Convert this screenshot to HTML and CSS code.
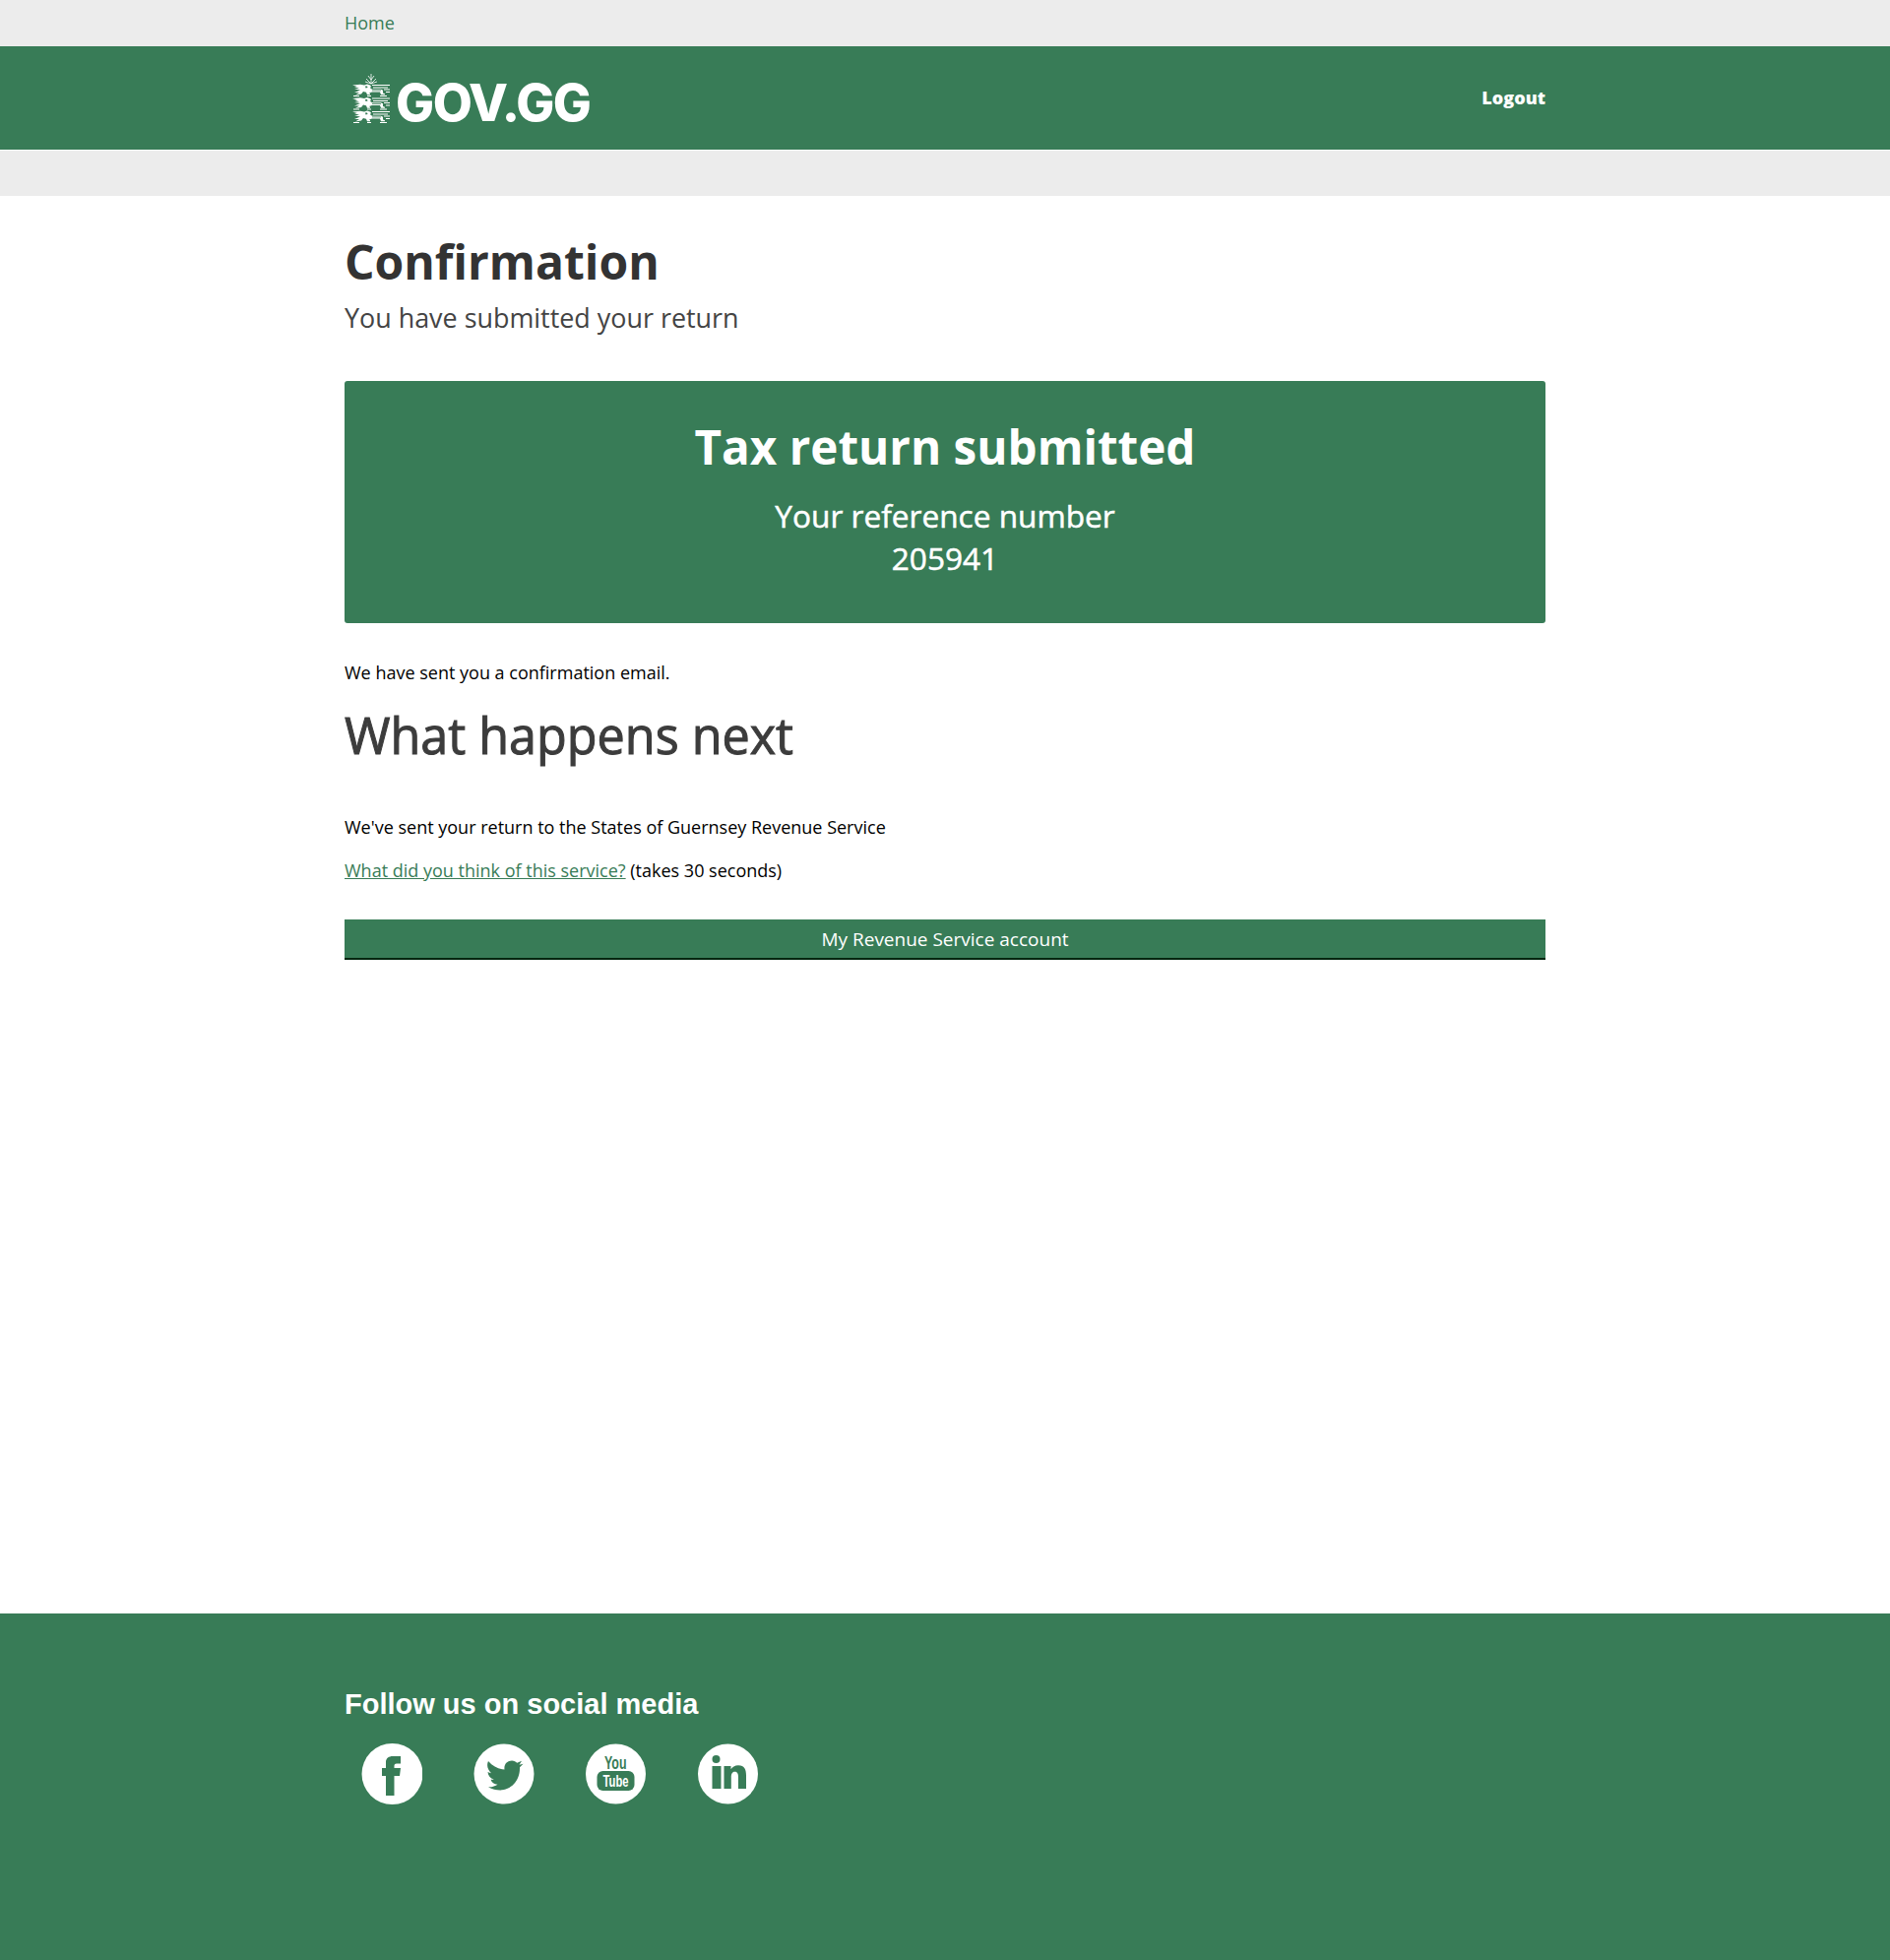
FILE: index.html
```html
<!DOCTYPE html>
<html lang="en">
<head>
<meta charset="utf-8">
<title>Confirmation</title>
<link rel="stylesheet" href="styles.css">
</head>
<body>
<nav class="crumbs"><div class="wrap"><a class="crumb" href="#">Home</a></div></nav>
<header class="masthead">
  <div class="wrap masthead-in">
    <a class="logo" href="#">
      <svg class="crest" viewBox="0 0 38 50" width="38" height="50" aria-hidden="true">
        <g fill="none" stroke="#fff" stroke-width=".8">
          <path d="M19 0v10M19 10l-5-5M19 10l5-5M19 10l-6-2M19 10l6-2M19 6l-3-4M19 6l3-4"/>
        </g>
        <g id="lion" fill="#fff">
          <path d="M0 11.500L5 13L2 13.300L7 14.800L2 15.600L8 16.600L2 19L7 18.900L3 21.400L9 20.400L11 17.900L14 18.700L15 21.200H18V20.200L17 19.400L20 18.400H28L29 21.200H33V20.200L31 19.400V16.700L29 15.700H20L18 14.200L19 12.700L18 11.500L15 10.500L12 11.500L8 10.800Z"/>
          <path d="M20 11h18v1H20zM21 13.500h15v.9H21zM32 15.500h6v1h-6zM34 18h4v1h-4zM15 22h4v1h-4zM28 22h7v1h-7zM1 22h6v1H1z"/>
          <path class="crest-eye" d="M13 12.500h2l.5 1.500-2 .5z"/>
          <path class="crest-eye" d="M20 16.500h9v.8h-9z"/>
        </g>
        <use href="#lion" y="13.500"/>
        <use href="#lion" y="27"/>
      </svg>
      <span class="wordmark">GOV.GG</span>
    </a>
    <a class="logout" href="#">Logout</a>
  </div>
</header>
<div class="subbar"></div>
<main class="wrap main">
  <h1 class="title">Confirmation</h1>
  <p class="lead">You have submitted your return</p>
  <section class="panel">
    <h2 class="panel-title">Tax return submitted</h2>
    <div class="panel-body">Your reference number<br>205941</div>
  </section>
  <p class="text">We have sent you a confirmation email.</p>
  <h2 class="next">What happens next</h2>
  <p class="text">We've sent your return to the States of Guernsey Revenue Service</p>
  <p class="text"><a class="link" href="#">What did you think of this service?</a> (takes 30 seconds)</p>
  <a class="btn" href="#">My Revenue Service account</a>
</main>
<footer class="footer">
  <div class="wrap">
    <h2 class="follow">Follow us on social media</h2>
    <ul class="social">
      <li><svg viewBox="0 0 62 62" width="62" height="62"><circle cx="31.500" cy="31" r="31" fill="#fff"/><path class="glyph" d="M25 53V33h-4v-8h4v-6c0-4 3-6 7-6h8v7.500h-4c-2 0-2.500 1-2.500 2.500V25h6.500l-1 8h-5.500v20z"/></svg></li>
      <li><svg viewBox="0 0 62 62" width="62" height="62"><circle cx="31" cy="31" r="30.500" fill="#fff"/><path class="glyph" d="M15 18c5 5.500 10.500 8 16.500 8.500-.8-5.500 3-9 7.500-9 2.300 0 4 1 5.300 2.300l4.700-2-2.500 4 4-1-3.500 3.500C47.500 38 38 47.500 27 47.500c-4 0-8-1-12-3.300 3.500.3 7-.7 9.500-2.500-3.500-.5-6-2-7-5 1.200.2 2.300.2 3.300-.2-3.800-1-6-4-6.300-7.500 1.200.7 2.400 1 3.500 1.200C14.500 27 13 22.500 15 18z"/></svg></li>
      <li><svg viewBox="0 0 62 62" width="62" height="62"><circle cx="30.500" cy="31" r="30.500" fill="#fff"/><text x="19" y="26" class="yt-you" textLength="22.500" lengthAdjust="spacingAndGlyphs">You</text><rect class="glyph" x="11.500" y="28" width="38" height="20" rx="6"/><text x="17.500" y="44" class="yt-tube" textLength="26" lengthAdjust="spacingAndGlyphs">Tube</text></svg></li>
      <li><svg viewBox="0 0 62 62" width="62" height="62"><circle cx="30.500" cy="31" r="30.500" fill="#fff"/><circle class="glyph" cx="18.500" cy="16" r="4"/><path class="glyph" d="M14.500 23h9v23h-9zM26.500 23h7v3.300c1.300-2.200 4-4 7.500-4 6.500 0 8 4.500 8 10.500V46h-8V34.500c0-3-.6-5.700-3.500-5.700s-3.700 2.500-3.700 5.500V46h-7.300z"/></svg></li>
    </ul>
  </div>
</footer>
</body>
</html>
```

FILE: styles.css
```css
* { box-sizing: border-box; }
html, body { margin: 0; padding: 0; }
body { font-family: "Open Sans", sans-serif; color: #000; background: #fff; min-height: 1991px; display: flex; flex-direction: column; }
.wrap { width: 1220px; margin: 0 auto; }
.crumbs { height: 47px; background: #ececec; display: flex; align-items: center; padding-bottom: 2px; }
.crumb { color: #387c57; font-size: 18px; text-decoration: none; }
.masthead { height: 106px; background: #387c57; border-bottom: 1px solid #fff; }
.masthead-in { height: 105px; display: flex; align-items: center; justify-content: space-between; }
.logo { display: flex; align-items: center; padding-left: 8px; color: #fff; text-decoration: none; }
.crest { margin-right: 6px; }
.crest-eye, .glyph { fill: #387c57; }
.wordmark { font-family: "Inter", sans-serif; font-weight: 800; font-size: 52px; letter-spacing: -1.500px; line-height: 1; margin-top: 10px; }
.logout { color: #fff; font-weight: 800; font-size: 18px; text-decoration: none; margin-top: -2px; }
.subbar { height: 46px; background: #ececec; }
.main { flex: 1; padding-top: 38px; }
.title { margin: 0; font-size: 48px; line-height: 58px; font-weight: 700; color: #333; }
.lead { margin: 10px 0 0; font-size: 26.900px; line-height: 36px; color: #444; }
.panel { margin-top: 46px; height: 246px; padding-top: 35px; background: #387c57; border-radius: 3px; color: #fff; text-align: center; }
.panel-title { margin: 0; font-size: 47.600px; line-height: 64px; font-weight: 700; }
.panel-body { margin-top: 16px; font-size: 31.600px; line-height: 43px; font-weight: 400; -webkit-text-stroke: 0.5px #fff; }
.text { margin: 0 0 20px; font-size: 18px; line-height: 24px; }
.panel + .text { margin-top: 38px; margin-bottom: 0; }
.next { margin: 20px 0 49px; font-size: 50.300px; line-height: 64px; font-weight: 400; color: #3c3c3c; -webkit-text-stroke: 1px #3c3c3c; }
.link { color: #387c57; }
.btn { display: block; height: 41px; margin-top: 38px; background: #387c57; border-bottom: 2px solid #03260f; color: #fff; font-size: 19px; line-height: 40px; text-align: center; text-decoration: none; }
.footer { height: 352px; background: #387c57; color: #fff; padding-top: 72px; }
.follow { margin: 0; font-family: "Liberation Sans", sans-serif; font-size: 29px; line-height: 40px; font-weight: 700; }
.social { list-style: none; margin: 20px 0 0; padding: 0 0 0 17px; display: flex; gap: 52px; }
.social li { display: flex; }
.yt-you, .yt-tube { font-family: "Liberation Sans", sans-serif; font-weight: 700; }
.yt-you { font-size: 19px; fill: #387c57; }
.yt-tube { font-size: 16px; fill: #fff; }
```
